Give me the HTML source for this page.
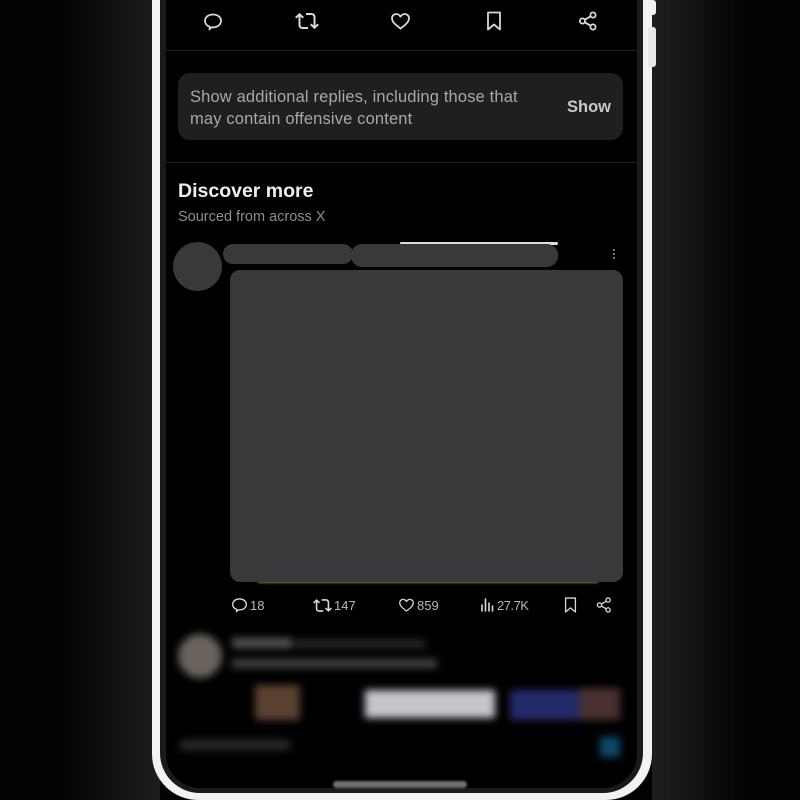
<!DOCTYPE html>
<html><head><style>
*{margin:0;padding:0;box-sizing:border-box}
body{width:800px;height:800px;background:#020204;overflow:hidden;position:relative;font-family:"Liberation Sans",sans-serif}
.glowL{position:absolute;left:60px;top:0;width:100px;height:800px;background:linear-gradient(90deg,#020204,#1e1e20)}
.glowR{position:absolute;left:652px;top:0;width:100px;height:800px;background:linear-gradient(90deg,#1e1e20,#020204)}
.frame{position:absolute;left:152px;top:-60px;width:500px;height:860px;background:#f2f2f4;border-radius:0 0 46px 46px}
.bezel{position:absolute;left:160px;top:-60px;width:483px;height:853px;background:#1a1a1c;border-radius:0 0 40px 40px}
.screen{position:absolute;left:166px;top:-60px;width:471px;height:848px;background:#000;border-radius:0 0 34px 34px;overflow:hidden}
.abs{position:absolute}
svg{stroke:#d8d8d8;fill:none;stroke-width:1.8;stroke-linecap:round;stroke-linejoin:round}
svg.f{stroke:none;fill:#d8d8d8}
</style></head><body>
<div class="glowL"></div><div class="glowR"></div>
<div class="frame"></div>
<div class="abs" style="left:648px;top:0;width:8px;height:15px;background:#f2f2f4;border-radius:0 3px 3px 0"></div>
<div class="abs" style="left:648px;top:27px;width:8px;height:40px;background:#e8e8ea;border-radius:0 3px 3px 0"></div>
<div class="bezel"></div>
<div class="screen"></div>
<!-- top icons -->
<svg class="abs" style="left:203px;top:11px" width="20" height="20" viewBox="0 0 20 20"><path d="M8 16.5 L6.5 18.5 L6.8 15.8 C3.8 14.8 2 12.5 2 10 C2 6 5.5 3.5 10 3.5 C14.5 3.5 18 6 18 9.8 C18 13.8 14.3 16.3 10 16.3 Z"/></svg>
<svg class="abs f" style="left:295px;top:9px" width="24" height="24" viewBox="0 0 24 24"><path d="M4.5 3.88l4.432 4.14-1.364 1.46L5.5 7.55V16c0 1.1.896 2 2 2H13v2H7.5c-2.209 0-4-1.79-4-4V7.55L1.432 9.48.068 8.02 4.5 3.88zM16.5 6H11V4h5.5c2.209 0 4 1.79 4 4v8.45l2.068-1.93 1.364 1.46-4.432 4.14-4.432-4.14 1.364-1.46 2.068 1.930V8c0-1.1-.896-2-2-2z"/></svg>
<svg class="abs" style="left:390px;top:11px" width="21" height="20" viewBox="0 0 21 20"><path d="M10.5 17.5 C5 13.5 2 10.8 2 7.2 C2 4.8 4 3 6.2 3 C8 3 9.5 4 10.5 5.6 C11.5 4 13 3 14.8 3 C17 3 19 4.8 19 7.2 C19 10.8 16 13.5 10.5 17.5Z"/></svg>
<svg class="abs" style="left:485px;top:10px" width="18" height="22" viewBox="0 0 18 22"><path d="M3 2.5h12v17l-6-5-6 5z"/></svg>
<svg class="abs" style="left:577px;top:10px" width="22" height="22" viewBox="0 0 22 22"><circle cx="16" cy="5" r="2.6"/><circle cx="5.5" cy="11" r="2.6"/><circle cx="16" cy="17" r="2.6"/><path d="M7.8 9.7l5.9-3.4M7.8 12.3l5.9 3.4"/></svg>
<div class="abs" style="left:166px;top:50px;width:471px;height:1px;background:#1d1d20"></div>
<div class="abs" style="left:178px;top:73px;width:445px;height:67px;background:#1f1f22;border-radius:12px"></div>
<div class="abs" style="left:190px;top:87px;width:350px;font-size:16.5px;line-height:21.5px;color:#a8a8ac;letter-spacing:0.15px">Show additional replies, including those that may contain offensive content</div>
<div class="abs" style="left:567px;top:98px;font-size:16.5px;font-weight:bold;color:#c8c8cc">Show</div>
<div class="abs" style="left:166px;top:162px;width:471px;height:1px;background:#1d1d20"></div>
<div class="abs" style="left:178px;top:180px;font-size:19.5px;font-weight:bold;color:#eeeeee">Discover more</div>
<div class="abs" style="left:178px;top:209px;font-size:14.5px;color:#8e8e93">Sourced from across X</div>
<div class="abs" style="left:173px;top:242px;width:49px;height:49px;border-radius:50%;background:#39393b"></div>
<div class="abs" style="left:223px;top:244px;width:130px;height:20px;border-radius:10px;background:#39393b"></div>
<div class="abs" style="left:400px;top:242px;width:158px;height:3px;background:#ddd;border-radius:2px"></div>
<div class="abs" style="left:351px;top:244px;width:207px;height:23px;border-radius:11px;background:#39393b"></div>
<div class="abs" style="left:613px;top:249px;width:2px;height:2px;background:#777;box-shadow:0 4px #777,0 8px #777"></div>
<div class="abs" style="left:373px;top:270px;width:10px;height:5px;background:#a8a050"></div>
<div class="abs" style="left:464px;top:270px;width:10px;height:5px;background:#a8a050"></div>
<div class="abs" style="left:258px;top:578px;width:340px;height:5px;background:#7d8030;filter:blur(1px)"></div>
<div class="abs" style="left:230px;top:270px;width:393px;height:312px;background:#39393b;border-radius:10px"></div>
<!-- actions -->
<svg class="abs" style="left:231px;top:596px;stroke-width:1.6" width="17" height="17" viewBox="0 0 20 20"><path d="M8 16.5 L6.5 18.5 L6.8 15.8 C3.8 14.8 2 12.5 2 10 C2 6 5.5 3.5 10 3.5 C14.5 3.5 18 6 18 9.8 C18 13.8 14.3 16.3 10 16.3 Z"/></svg>
<div class="abs" style="left:250px;top:598px;font-size:13px;color:#b8b8bc">18</div>
<svg class="abs f" style="left:313px;top:596px" width="19" height="19" viewBox="0 0 24 24"><path d="M4.5 3.88l4.432 4.14-1.364 1.46L5.5 7.55V16c0 1.1.896 2 2 2H13v2H7.5c-2.209 0-4-1.79-4-4V7.55L1.432 9.48.068 8.02 4.5 3.88zM16.5 6H11V4h5.5c2.209 0 4 1.79 4 4v8.450l2.068-1.93 1.364 1.46-4.432 4.14-4.432-4.14 1.364-1.46 2.068 1.93V8c0-1.1-.896-2-2-2z"/></svg>
<div class="abs" style="left:334px;top:598px;font-size:13px;color:#b8b8bc">147</div>
<svg class="abs" style="left:398px;top:597px;stroke-width:1.6" width="17" height="16" viewBox="0 0 21 20"><path d="M10.5 17.5 C5 13.5 2 10.8 2 7.2 C2 4.8 4 3 6.2 3 C8 3 9.5 4 10.5 5.6 C11.5 4 13 3 14.8 3 C17 3 19 4.8 19 7.2 C19 10.8 16 13.5 10.5 17.5Z"/></svg>
<div class="abs" style="left:417px;top:598px;font-size:13px;color:#b8b8bc">859</div>
<svg class="abs" style="left:480px;top:597px;stroke-width:1.6" width="15" height="15" viewBox="0 0 15 15"><path d="M2 14V8M5.5 14V2M9 14V6M12.5 14V9"/></svg>
<div class="abs" style="left:497px;top:598px;font-size:13px;color:#b8b8bc;letter-spacing:-0.5px">27.7K</div>
<svg class="abs" style="left:563px;top:596px;stroke-width:1.6" width="15" height="18" viewBox="0 0 18 22"><path d="M3 2.5h12v17l-6-5-6 5z"/></svg>
<svg class="abs" style="left:595px;top:596px;stroke-width:1.6" width="18" height="18" viewBox="0 0 22 22"><circle cx="16" cy="5" r="2.6"/><circle cx="5.5" cy="11" r="2.6"/><circle cx="16" cy="17" r="2.6"/><path d="M7.8 9.7l5.9-3.4M7.8 12.3l5.9 3.4"/></svg>
<!-- blurred tweet -->
<div style="filter:blur(4px)">
<div class="abs" style="left:178px;top:634px;width:44px;height:44px;border-radius:50%;background:#6a625c"></div>
<div class="abs" style="left:232px;top:638px;width:60px;height:10px;background:#555"></div>
<div class="abs" style="left:295px;top:640px;width:130px;height:8px;background:#2c2c2e"></div>
<div class="abs" style="left:232px;top:659px;width:205px;height:9px;background:#444"></div>
<div class="abs" style="left:255px;top:685px;width:45px;height:35px;background:#5a4030"></div>
<div class="abs" style="left:365px;top:690px;width:130px;height:28px;background:#c8c4cc"></div>
<div class="abs" style="left:510px;top:690px;width:70px;height:30px;background:#242a6a"></div>
<div class="abs" style="left:580px;top:688px;width:40px;height:32px;background:#4a3030"></div>
<div class="abs" style="left:180px;top:740px;width:110px;height:10px;background:#2a2a2c"></div>
<div class="abs" style="left:600px;top:737px;width:20px;height:20px;background:#0c4a6a"></div>
</div>
<div class="abs" style="left:333px;top:781px;width:134px;height:7px;border-radius:4px;background:#6e6e72;filter:blur(1px)"></div>
</body></html>
